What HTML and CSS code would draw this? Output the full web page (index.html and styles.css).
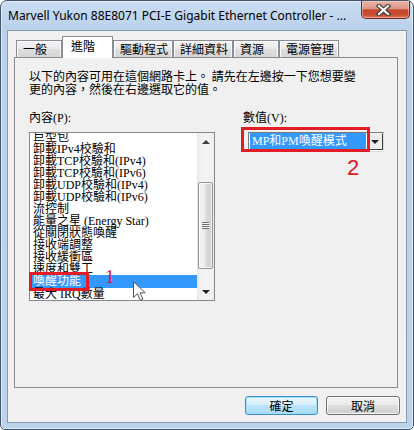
FILE: index.html
```html
<!DOCTYPE html>
<html lang="zh-Hant">
<head>
<meta charset="utf-8">
<title>Marvell Yukon 88E8071 PCI-E Gigabit Ethernet Controller</title>
<link rel="stylesheet" href="styles.css">
</head>
<body>
<div class="window">
  <div class="titlebar">
    <span class="title">Marvell Yukon 88E8071 PCI-E Gigabit Ethernet Controller - ...</span>
    <div class="close">
      <svg width="15" height="12" viewBox="0 0 15 12">
        <path d="M3 2 L12 10 M12 2 L3 10" stroke="#3b3b3b" stroke-width="4.4" stroke-linecap="square"/>
        <path d="M3 2 L12 10 M12 2 L3 10" stroke="#ffffff" stroke-width="2.2" stroke-linecap="square"/>
      </svg>
    </div>
  </div>
  <div class="client">
    <div class="tabs">
      <div class="tab">一般</div>
      <div class="tab active">進階</div>
      <div class="tab">驅動程式</div>
      <div class="tab">詳細資料</div>
      <div class="tab">資源</div>
      <div class="tab">電源管理</div>
    </div>
    <div class="panel">
      <p class="desc">以下的內容可用在這個網路卡上。 請先在左邊按一下您想要變<br>更的內容，然後在右邊選取它的值。</p>
      <div class="cols">
        <div class="col-left">
          <div class="label">內容(P):</div>
          <div class="listbox">
            <div class="items">
              <div class="item">巨型包</div>
              <div class="item">卸載IPv4校驗和</div>
              <div class="item">卸載TCP校驗和(IPv4)</div>
              <div class="item">卸載TCP校驗和(IPv6)</div>
              <div class="item">卸載UDP校驗和(IPv4)</div>
              <div class="item">卸載UDP校驗和(IPv6)</div>
              <div class="item">流控制</div>
              <div class="item">能量之星 (Energy Star)</div>
              <div class="item">從關閉狀態喚醒</div>
              <div class="item">接收端調整</div>
              <div class="item">接收緩衝區</div>
              <div class="item">速度和雙工</div>
              <div class="item selected">喚醒功能</div>
              <div class="item">最大 IRQ數量</div>
            </div>
            <div class="scrollbar">
              <div class="sb-btn"><span class="tri-up"></span></div>
              <div class="sb-track">
                <div class="thumb"><span class="grip"></span></div>
              </div>
              <div class="sb-btn"><span class="tri-down"></span></div>
            </div>
            <div class="mark mark-1"></div>
            <div class="num num-1">1</div>
            <svg class="cursor" width="14" height="21" viewBox="0 0 14 21">
              <path d="M0.5 0.5 L0.5 16.5 L4.5 12.8 L7.3 19.3 L9.8 18.2 L7.1 11.8 L12.2 11.8 Z" fill="#fff" stroke="#555" stroke-width="1" stroke-linejoin="miter"/>
            </svg>
          </div>
        </div>
        <div class="col-right">
          <div class="label">數值(V):</div>
          <div class="combo">
            <div class="combo-value">MP和PM喚醒模式</div>
            <div class="combo-arrow"><span class="tri-down"></span></div>
          </div>
          <div class="mark mark-2"></div>
          <div class="num num-2">2</div>
        </div>
      </div>
    </div>
    <div class="buttons">
      <div class="btn default">確定</div>
      <div class="btn">取消</div>
    </div>
  </div>
</div>
</body>
</html>
```
FILE: styles.css
```css
* { box-sizing: border-box; }

html, body {
  margin: 0;
  padding: 0;
  width: 414px;
  height: 430px;
  overflow: hidden;
  background: #ffffff;
}

.window {
  width: 414px;
  height: 430px;
  border: 1px solid #44566c;
  border-radius: 7px 7px 5px 5px;
  background: linear-gradient(to bottom, #c9dcf1 0px, #bad1eb 30px, #bcd3ec 100%);
  box-shadow: inset 0 0 0 1px rgba(255, 255, 255, 0.55);
  display: flex;
  flex-direction: column;
}

.titlebar {
  height: 29px;
  display: flex;
  align-items: flex-start;
  padding: 0 3px 0 7px;
}

.title {
  flex: 1;
  margin-top: 7px;
  font-family: "Noto Sans", "Open Sans", sans-serif;
  font-size: 12px;
  line-height: 16px;
  letter-spacing: 0;
  color: #000;
  white-space: nowrap;
  overflow: hidden;
}

.close {
  width: 49px;
  height: 18px;
  border: 1px solid #6b2a1f;
  border-top: none;
  border-radius: 0 0 5px 5px;
  background: linear-gradient(to bottom, #e9b3a7 0%, #dc9686 45%, #c6462f 52%, #c54a32 80%, #e07a5a 100%);
  box-shadow: inset 0 0 0 1px rgba(255, 220, 210, 0.45);
  display: flex;
  align-items: center;
  justify-content: center;
}

.close svg { display: block; margin-left: -4px; margin-top: 1px; }

.client {
  flex: 1;
  margin: 0 6px 6px;
  border: 1px solid #8a98ab;
  background: #f0f0f0;
  display: flex;
  flex-direction: column;
  font-family: "Noto Sans CJK TC", sans-serif;
  font-size: 12px;
  color: #000;
}

.tabs {
  display: flex;
  align-items: flex-end;
  height: 21px;
  margin-top: 5px;
  padding-left: 8px;
}

.tab {
  height: 17px;
  min-width: 46px;
  padding: 0 4px 0 6px;
  border: 1px solid #898c95;
  border-bottom: none;
  background: linear-gradient(to bottom, #f4f4f4, #e9e9e9 50%, #dedede 52%, #d6d6d6);
  box-shadow: inset 1px 1px 0 #fcfcfc, inset -1px 0 0 #fafafa;
  line-height: 15px;
  white-space: nowrap;
}

.tab.active {
  position: relative;
  z-index: 1;
  height: 22px;
  min-width: 51px;
  margin-bottom: -1px;
  padding: 1px 4px 0 8px;
  background: #ffffff;
  box-shadow: none;
}

.panel {
  height: 331px;
  margin: 0 8px 0 6px;
  border: 1px solid #898c95;
  background: #f0f0f0;
  padding: 11px 14px 0 14px;
}

.desc {
  margin: 0;
  line-height: 13px;
  white-space: nowrap;
}

.cols {
  display: flex;
  margin-top: 17px;
}

.col-left { width: 186px; }

.col-right {
  position: relative;
  margin-left: 28px;
  flex: 1;
}

.label {
  font-family: "Liberation Serif", "Noto Sans CJK TC", serif;
  line-height: 13px;
  height: 13px;
}

.listbox {
  position: relative;
  margin-top: 7px;
  width: 186px;
  height: 169px;
  border: 1px solid #828790;
  background: #fff;
  display: flex;
}

.items {
  flex: 1;
  overflow: hidden;
  padding-left: 1px;
}

.item {
  height: 12px;
  line-height: 12px;
  padding-left: 2px;
  white-space: nowrap;
  font-family: "Liberation Serif", "Noto Sans CJK TC", serif;
  font-size: 12px;
}

.item:first-child { margin-top: -2px; }

.item.selected {
  background: #3399ff;
  color: #fff;
  height: 13px;
  line-height: 13px;
}

.scrollbar {
  width: 17px;
  display: flex;
  flex-direction: column;
  background: linear-gradient(to right, #e3e3e3 0, #efefef 2px, #f4f4f4 50%, #eeeeee 100%);
}

.sb-btn {
  height: 17px;
  display: flex;
  align-items: center;
  justify-content: center;
}

.sb-track {
  flex: 1;
  padding-top: 32px;
}

.thumb {
  height: 87px;
  margin: 0 1px;
  border: 1px solid #979797;
  border-radius: 2px;
  background: linear-gradient(to right, #f3f3f3, #ececec 45%, #dadada 55%, #cfcfcf);
  box-shadow: inset 0 0 0 1px rgba(255, 255, 255, 0.7);
  display: flex;
  align-items: center;
  justify-content: center;
}

.grip {
  width: 7px;
  height: 7px;
  background: repeating-linear-gradient(to bottom, #6f6f6f 0, #6f6f6f 1px, #f6f6f6 1px, #f6f6f6 2px);
}

.tri-up {
  width: 0;
  height: 0;
  border-left: 4px solid transparent;
  border-right: 4px solid transparent;
  border-bottom: 4px solid #3f3f3f;
}

.tri-down {
  width: 0;
  height: 0;
  border-left: 4px solid transparent;
  border-right: 4px solid transparent;
  border-top: 4px solid #1f1f1f;
}

.combo {
  margin-top: 7px;
  margin-left: 5px;
  width: 136px;
  height: 20px;
  border: 1px solid;
  border-color: #7a7a7a #dcdcdc #dcdcdc #7a7a7a;
  background: #fff;
  display: flex;
  padding: 0 0 1px 1px;
}

.combo-value {
  flex: 1;
  height: 16px;
  margin-right: 1px;
  background: #3399ff;
  color: #fff;
  line-height: 16px;
  padding-left: 2px;
  font-family: "Liberation Serif", "Noto Sans CJK TC", serif;
  white-space: nowrap;
}

.combo-arrow {
  width: 16px;
  height: 17px;
  border: 1px solid;
  border-color: #f4f4f4 #404040 #404040 #f4f4f4;
  background: #ececec;
  display: flex;
  align-items: center;
  justify-content: center;
}

.mark {
  position: absolute;
  border: 3px solid #e21d26;
}

.mark-1 {
  left: -1px;
  top: 139px;
  width: 60px;
  height: 19px;
}

.mark-2 {
  left: -2px;
  top: 15px;
  width: 129px;
  height: 25px;
}

.num {
  position: absolute;
  color: #e8141c;
}

.num-1 {
  left: 75px;
  top: 134px;
  font-family: "Liberation Serif", serif;
  font-size: 19px;
  line-height: 19px;
}

.num-2 {
  left: 104px;
  top: 45px;
  font-family: "Liberation Sans", sans-serif;
  font-size: 22px;
  line-height: 22px;
}

.cursor {
  position: absolute;
  left: 103px;
  top: 148px;
}

.buttons {
  display: flex;
  justify-content: flex-end;
  gap: 8px;
  margin-top: 8px;
  padding-right: 6px;
}

.btn {
  width: 74px;
  height: 19px;
  border: 1px solid #707070;
  border-radius: 3px;
  background: linear-gradient(to bottom, #f2f2f2, #ebebeb 45%, #dddddd 50%, #cfcfcf);
  box-shadow: inset 0 0 0 1px rgba(255, 255, 255, 0.75);
  text-align: center;
  line-height: 17px;
}

.btn.default {
  width: 73px;
  border-color: #3c8ec4;
  background: linear-gradient(to bottom, #eaf6fd, #d9f0fc 45%, #bee6fd 50%, #a7d9f5);
  box-shadow: inset 0 0 0 1px #9fe0ff;
}
```
